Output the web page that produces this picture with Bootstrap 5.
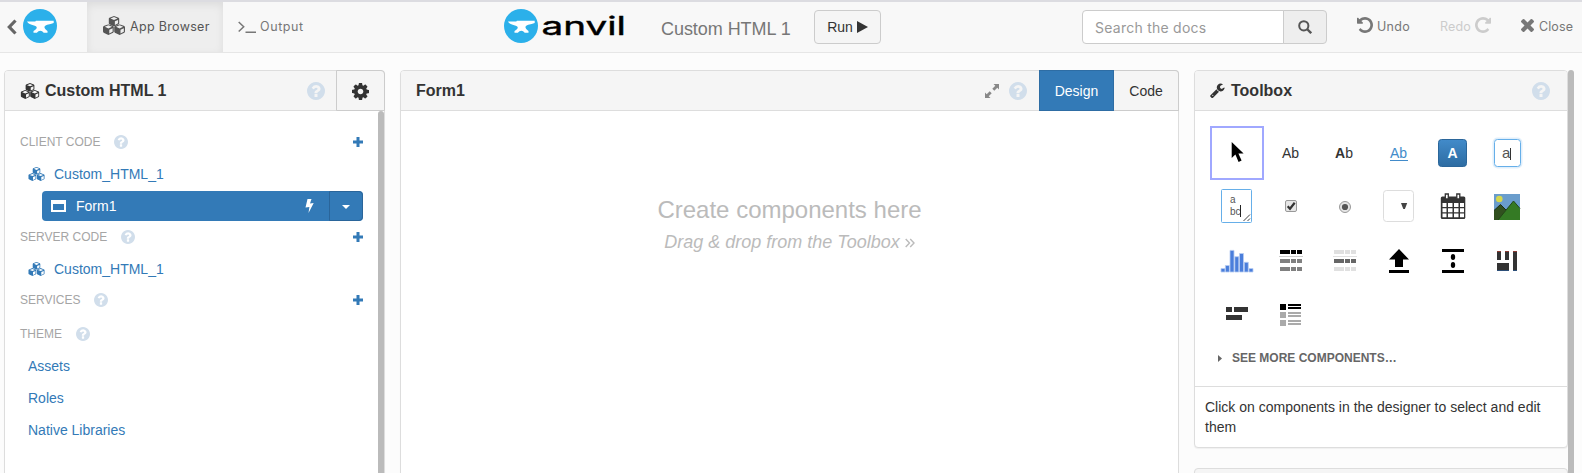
<!DOCTYPE html>
<html lang="en">
<head>
<meta charset="utf-8">
<meta name="viewport" content="width=device-width, initial-scale=1">
<title>Anvil - Custom HTML 1</title>
<link href="https://cdn.jsdelivr.net/npm/bootstrap@5.3.0/dist/css/bootstrap.min.css" rel="stylesheet">
<style>
body{font:14px/20px "Liberation Sans",Arial,sans-serif;color:#333;background:#fcfcfc;height:473px;overflow:hidden}
svg{display:block;flex:none;fill:currentColor}
a{text-decoration:none}
.topbar{height:53px;background:#f8f8f8;border-top:2px solid #dcdce1;border-bottom:1px solid #e6e6e6;padding:0;flex-wrap:nowrap;justify-content:flex-start;align-items:stretch}
.topbar>*{flex:none}
.geo{font-family:Inter,sans-serif;font-size:12.5px;color:#777}
.home{width:87px;padding-left:7px;color:#666}
.tab{height:50px}
.tab-on{width:136px;background:#eee;color:#555;box-shadow:inset 0 3px 9px rgba(0,0,0,.075);padding-left:15px}
.tab-out{width:281px;padding-left:15px}
.brand{width:157px}
.app-title{width:153px;font-size:18px;color:#777;padding-top:4px}
.btn-run{width:67px;height:34px;margin-top:8px;padding:0;font-size:14px;color:#333;background:#f5f5f5;border:1px solid #ccc;border-radius:4px}
.search{width:245px;height:34px;margin:8px 0 0 201px}
.search .form-control{font:14px Inter,sans-serif;letter-spacing:.25px;border-color:#ccc;padding:0 12px;border-radius:4px}
.search .form-control::placeholder{color:#999}
.search .input-group-text{width:44px;background:#eee;border-color:#ccc;padding:0;justify-content:center;color:#555;border-radius:4px}
.work{height:403px;margin-top:17px;overflow:hidden;padding-left:4px}
.pane{border:1px solid #ddd;border-radius:4px;background:#fff;flex:none;box-shadow:0 1px 1px rgba(0,0,0,.05)}
.tall{height:420px}
.pane-head{height:40px;background:#f5f5f5;border-bottom:1px solid #ddd;border-radius:3px 3px 0 0;padding-left:15px;font-size:16px;font-weight:700;line-height:39px}
.pane-left{width:381px}.pane-mid{width:779px;margin-left:15px}.tools{width:374px;margin-left:15px}
.help{color:#d1deeb}
.gear{width:49px;height:41px;margin:-1px -1px 0 11px;border:1px solid #ccc;border-radius:0 4px 0 0}
.seg{height:41px;margin-top:-1px;border:1px solid #ccc;padding:0;border-radius:0;font-size:14px;line-height:41px;color:#333}
.seg-on{width:75px;background:#337ab7;border-color:#2e6da4;color:#fff}
.seg-off{width:65px;border-left:0;border-radius:0 4px 0 0;margin-right:-1px;background:#f5f5f5}
.bar-thumb{width:6px;background:#bbb;border-radius:4px 4px 0 0;flex:none}
.tree{padding:15px 15px 0 15px}
.sec{height:32px;color:#a5a5a5;font-size:12px}
.sec .plus{color:#337ab7}
.leaf{height:32px;color:#337ab7;padding-left:8px;font-size:14px}
.form-btn{height:30px;margin:1px 0 0 22px;border-radius:4px;background:#337ab7;color:#fff;padding-left:9px}
.form-btn .drop{width:34px;height:30px;border:1px solid #2a659a;border-radius:0 4px 4px 0}
.canvas-msg{color:#bbb;text-align:center;padding-top:84px}
.canvas-msg .big{font-size:24px;line-height:30px}
.canvas-msg .sub{font-size:18px;line-height:20px;font-style:italic;margin-top:7px}
.palette{display:grid;grid-template-columns:repeat(6,54px);grid-auto-rows:54px;margin:15px 0 0 15px}
.palette svg{width:54px;height:54px}
.picked{outline:2px solid #a0a8ff;outline-offset:-2px}
.more{font-size:12px;font-weight:700;color:#666;margin:6px 0 0 23px;height:20px}
.hint{margin-top:18px;border-top:1px solid #ddd;padding:10px 10px 10px;line-height:20px}
.next{height:30px;margin-top:20px;background:#f5f5f5}
</style>
</head>
<body>
<svg width="0" height="0" class="position-absolute">
<symbol id="q" viewBox="128 128 1536 1536"><path d="M1024 1376v-192q0-14-9-23t-23-9h-192q-14 0-23 9t-9 23v192q0 14 9 23t23 9h192q14 0 23-9t9-23zm256-672q0-88-55.500-163t-138.500-116-170-41q-243 0-371 213-15 24 8 42l132 100q7 6 19 6 16 0 25-12 53-68 86-92 34-24 86-24 48 0 85.500 26t37.500 59q0 38-20 61t-68 45q-63 28-115.500 86.500t-52.500 125.500v36q0 14 9 23t23 9h192q14 0 23-9t9-23q0-19 21.500-49.500t54.500-49.500q32-18 49-28.500t46-35 44.500-48 28-60.500 12.500-81zm384 192q0 209-103 385.500t-279.500 279.500-385.500 103-385.500-103-279.500-279.500-103-385.500 103-385.500 279.500-279.500 385.500-103 385.500 103 279.500 279.500 103 385.500z"/></symbol>
<symbol id="plus" viewBox="0 0 10 10"><path d="M3.500 0h3v3.500H10v3H6.500V10h-3V6.500H0v-3h3.500z"/></symbol>
<symbol id="undo" viewBox="128 128 1536 1536"><path d="M1664 896q0 156-61 298t-164 245-245 164-298 61q-172 0-327-72.500t-264-204.500q-7-10-6.500-22.500t8.500-20.500l137-138q10-9 25-9 16 2 23 12 73 95 179 147t225 52q104 0 198.500-40.500t163.500-109.500 109.500-163.500 40.500-198.500-40.500-198.500-109.500-163.500-163.500-109.500-198.500-40.500q-98 0-188 35.500t-160 101.500l137 138q31 30 14 69-17 40-59 40h-448q-26 0-45-19t-19-45v-448q0-42 40-59 39-17 69 14l130 129q107-101 244.500-156.500t284.500-55.500q156 0 298 61t245 164 164 245 61 298z"/></symbol>
<symbol id="cube" viewBox="0 0 12 12"><path fill-rule="evenodd" d="M6 0l5.300 2 .7 1v5.500l-.7 1L6 12 .7 9.500 0 8.500V3l.7-1zM6 1.200L2 2.900 6 4.600l4-1.700zM7 6.100v4.200l3.700-1.900V4.500z"/></symbol>
<symbol id="cubes" viewBox="0 0 24 20"><use href="#cube" x="5.800" y="0" width="12.400" height="11" preserveAspectRatio="none"/><use href="#cube" x="0" y="8.700" width="12.200" height="11.300" preserveAspectRatio="none"/><use href="#cube" x="11.800" y="8.700" width="12.200" height="11.300" preserveAspectRatio="none"/></symbol>
<symbol id="anvil" viewBox="0 0 34 34"><circle cx="17" cy="17" r="17" fill="#2bb0ea"/><path fill="#fff" d="M4 12.600h8.300l.6-.9h17.800v2.200c-2 .7-4 1.200-6.500 1.800-2.500.8-3.300 1.900-2.400 3.600.5.900 1.300 1.700 2.700 2.800v1.700h-3.800c-.9-1.300-2.200-2-3.400-2s-2.500.7-3.400 2h-3.400v-1.700c1.700-1.200 2.800-2 3.200-3.200.3-1.300-.6-2-2.700-2.500-3.200-.5-5.900-1.700-7-3.800z"/></symbol>
</svg>

<nav class="navbar topbar">
  <div class="home d-flex align-items-center">
    <svg width="10" height="16" viewBox="0 0 10 16"><path d="M8.500 1.500L2.300 8l6.200 6.500" fill="none" stroke="currentColor" stroke-width="3.200"/></svg>
    <svg width="34" height="34" style="margin-left:6px;margin-top:-3px"><use href="#anvil"/></svg>
  </div>
  <div class="tab tab-on geo d-flex align-items-center">
    <svg width="24" height="19" class="me-1" style="margin-top:-4px"><use href="#cubes"/></svg><span style="letter-spacing:.32px">App Browser</span>
  </div>
  <div class="tab tab-out geo d-flex align-items-center">
    <svg width="18" height="14" viewBox="0 0 18 14" fill="none" style="margin-right:4px"><path d="M.7 2l5 4.800L.7 11.500M7.500 12.200H18" fill="none" stroke="currentColor" stroke-width="1.500"/></svg><span style="letter-spacing:.6px">Output</span>
  </div>
  <div class="brand d-flex">
    <svg width="34" height="34" style="margin-top:7px"><use href="#anvil"/></svg>
    <svg width="90" height="40" viewBox="0 0 90 40"><text x="3.500" y="32.800" font-family="Inter,sans-serif" font-size="25.500" font-weight="400" fill="#000" stroke="#000" stroke-width=".4" textLength="84.500" lengthAdjust="spacingAndGlyphs">anvil</text></svg>
  </div>
  <div class="app-title d-flex align-items-center" style="letter-spacing:-.05px">Custom HTML 1</div>
  <button class="btn btn-run d-flex align-items-center justify-content-center">Run<svg width="11" height="12" viewBox="0 0 11 12" style="margin-left:4px"><path d="M0 0l11 6-11 6z"/></svg></button>
  <div class="input-group search">
    <input class="form-control" type="text" placeholder="Search the docs">
    <span class="input-group-text"><svg width="14" height="14" viewBox="0 0 14 14" fill="none" stroke="currentColor" stroke-width="2"><circle cx="5.800" cy="5.800" r="4.600" fill="none"/><path d="M9 9l4.200 4.200" stroke-width="2.400"/></svg></span>
  </div>
  <div class="geo d-flex align-items-center" style="margin-left:30px;width:83px"><svg width="16" height="16" style="margin:-4px 4px 0 0"><use href="#undo"/></svg><span style="letter-spacing:.3px">Undo</span></div>
  <div class="geo d-flex align-items-center" style="width:81px;color:#ccc"><span style="letter-spacing:.15px">Redo</span><svg width="16" height="16" style="margin:-4px 0 0 4px;transform:scaleX(-1)"><use href="#undo"/></svg></div>
  <div class="geo d-flex align-items-center"><svg width="13" height="13" viewBox="302 366 1188 1188" style="margin:-4px 5px 0 0"><path d="M1490 1322q0 40-28 68l-136 136q-28 28-68 28t-68-28l-294-294-294 294q-28 28-68 28t-68-28l-136-136q-28-28-28-68t28-68l294-294-294-294q-28-28-28-68t28-68l136-136q28-28 68-28t68 28l294 294 294-294q28-28 68-28t68 28l136 136q28 28 28 68t-28 68l-294 294 294 294q28 28 28 68z"/></svg><span style="letter-spacing:.1px">Close</span></div>
</nav>

<main class="work d-flex align-items-start">
  <section class="pane pane-left tall">
    <div class="pane-head d-flex align-items-center">
      <svg width="20" height="16" style="margin-right:5px"><use href="#cubes"/></svg>Custom HTML 1
      <svg class="help ms-auto" width="18" height="18"><use href="#q"/></svg>
      <div class="gear d-flex align-items-center justify-content-center"><svg width="17" height="17" viewBox="128 128 1536 1536" style="margin:3px 0 0 0"><path d="M1152 896q0-106-75-181t-181-75-181 75-75 181 75 181 181 75 181-75 75-181zm512-109v222q0 12-8 23t-20 13l-185 28q-19 54-39 91 35 50 107 138 10 12 10 25t-9 23q-27 37-99 108t-94 71q-12 0-26-9l-138-108q-44 23-91 38-16 136-29 186-7 28-36 28h-222q-14 0-24.500-8.500t-11.500-21.500l-28-184q-49-16-90-37l-141 107q-10 9-25 9-14 0-25-11-126-114-165-168-7-10-7-23 0-12 8-23 15-21 51-66.500t54-70.500q-27-50-41-99l-183-27q-13-2-21-12.500t-8-23.500v-222q0-12 8-23t19-13l186-28q14-46 39-92-40-57-107-138-10-12-10-24 0-10 9-23 26-36 98.500-107.500t94.500-71.500q13 0 26 10l138 107q44-23 91-38 16-136 29-186 7-28 36-28h222q14 0 24.500 8.500t11.500 21.500l28 184q49 16 90 37l142-107q9-9 24-9 13 0 25 10 129 119 165 170 7 8 7 22 0 12-8 23-15 21-51 66.500t-54 70.500q26 50 41 98l183 28q13 2 21 12.500t8 23.500z"/></svg></div>
    </div>
    <div class="d-flex" style="height:379px">
      <div class="tree flex-grow-1">
        <div class="sec d-flex align-items-center">CLIENT CODE<svg class="help" width="14" height="14" style="margin-left:14px"><use href="#q"/></svg><svg class="plus ms-auto" width="10" height="10"><use href="#plus"/></svg></div>
        <a class="leaf d-flex align-items-center" href="#"><svg width="17" height="14" style="margin-right:9px"><use href="#cubes"/></svg>Custom_HTML_1</a>
        <div class="form-btn d-flex align-items-center"><svg width="15" height="12" viewBox="0 0 15 12"><path fill-rule="evenodd" d="M0 0h15v12H0zM2 4v6h11V4z"/></svg><span style="margin-left:10px">Form1</span>
          <svg class="ms-auto" width="9" height="14" viewBox="0 0 9 14"><path d="M2.500 0h4L5 4.500 8.700 4 3.500 14l.9-6L.5 8.500z"/></svg>
          <div class="drop d-flex align-items-center justify-content-center" style="margin-left:15px"><svg width="8" height="4" viewBox="0 0 8 4" style="margin-top:2px"><path d="M0 0h8L4 4z"/></svg></div></div>
        <div class="sec d-flex align-items-center">SERVER CODE<svg class="help" width="14" height="14" style="margin-left:14px"><use href="#q"/></svg><svg class="plus ms-auto" width="10" height="10"><use href="#plus"/></svg></div>
        <a class="leaf d-flex align-items-center" href="#"><svg width="17" height="14" style="margin-right:9px"><use href="#cubes"/></svg>Custom_HTML_1</a>
        <div class="sec d-flex align-items-center" style="height:30px">SERVICES<svg class="help" width="14" height="14" style="margin-left:14px"><use href="#q"/></svg><svg class="plus ms-auto" width="10" height="10"><use href="#plus"/></svg></div>
        <div class="sec d-flex align-items-center" style="height:35px;padding-top:3px">THEME<svg class="help" width="14" height="14" style="margin-left:14px"><use href="#q"/></svg></div>
        <a class="leaf d-flex align-items-center" href="#">Assets</a>
        <a class="leaf d-flex align-items-center" href="#">Roles</a>
        <a class="leaf d-flex align-items-center" href="#">Native Libraries</a>
      </div>
      <div class="bar-thumb"></div>
    </div>
  </section>

  <section class="pane pane-mid tall">
    <div class="pane-head d-flex align-items-center">Form1
      <svg class="ms-auto" width="14" height="14" viewBox="0 0 14 14" style="color:#888;margin-right:10px"><path d="M8.500 0H14v5.500l-1.700-1.700-3 3-2-2 3-3zM5.500 14H0V8.500l1.700 1.700 3-3 2 2-3 3z"/></svg>
      <svg class="help" width="18" height="18" style="margin-right:12px"><use href="#q"/></svg>
      <button class="btn seg seg-on">Design</button><button class="btn seg seg-off">Code</button>
    </div>
    <div class="canvas-msg"><div class="big">Create components here</div><div class="sub">Drag &amp; drop from the Toolbox <svg class="d-inline-block" width="10" height="10" viewBox="0 0 10 10" fill="none"><path d="M.7 1l3.800 4-3.800 4M5.200 1L9 5 5.200 9" fill="none" stroke="currentColor" stroke-width="1.400"/></svg></div></div>
  </section>

  <div class="tools">
    <section class="pane">
      <div class="pane-head d-flex align-items-center">
        <svg width="15" height="15" viewBox="85 64 1664 1707" style="margin-right:6px"><path d="M448 1472q0-26-19-45t-45-19-45 19-19 45 19 45 45 19 45-19 19-45zm644-420l-682 682q-37 37-90 37-52 0-91-37l-106-108q-38-36-38-90 0-53 38-91l681-681q39 98 114.500 173.500t173.500 114.500zm634-435q0 39-23 106-47 134-164.500 217.500t-258.500 83.500q-185 0-316.500-131.500t-131.500-316.500 131.500-316.500 316.500-131.500q58 0 121.500 16.500t107.500 46.500q16 11 16 28t-16 28l-293 169v224l193 107q5-3 79-48.500t135.500-81 70.500-35.500q15 0 23.500 10t8.500 25z"/></svg>Toolbox
        <svg class="help ms-auto" width="18" height="18" style="margin-right:17px"><use href="#q"/></svg>
      </div>
      <div class="palette">
        <svg class="picked"><path fill="#000" d="M21.700 16v16l3.700-3.500 3.200 7.400 3-1.300-3.200-7.100h5.200z"/></svg>
        <svg><text x="18" y="32" font-size="14">Ab</text></svg>
        <svg><text x="17" y="32" font-size="14"><tspan font-weight="700">A</tspan>b</text></svg>
        <svg style="color:#428bca"><text x="18" y="32" font-size="14">Ab</text><path d="M18 34h18v1H18z"/></svg>
        <svg><defs><linearGradient id="gb" x2="0" y2="1"><stop stop-color="#428bca"/><stop offset="1" stop-color="#2d6ca2"/></linearGradient></defs><rect x="12.500" y="13.500" width="28" height="27" rx="3" fill="url(#gb)" stroke="#2b669a"/><text x="26.500" y="32" font-size="14" font-weight="700" fill="#fff" text-anchor="middle">A</text></svg>
        <svg><rect x="13.500" y="12.500" width="28" height="29" rx="4" fill="none" stroke="#e1effb" stroke-width="2"/><rect x="14.500" y="13.500" width="26" height="27" rx="3" fill="#fff" stroke="#66afe9"/><text x="22" y="31.500" font-size="15" fill="#555">a</text><path fill="#333" d="M30 22h1v12h-1z"/></svg>
        <svg><rect x="11.500" y="9.500" width="30" height="33" rx="1" fill="#fff" stroke="#66afe9"/><g font-size="10" fill="#555"><text x="20" y="23.300">a</text><text x="20" y="35">bc</text></g><path fill="#222" d="M30 25h1v12h-1z"/><path d="M33.500 41l6.500-6.500M37.500 41l2.500-2.500" stroke="#444"/></svg>
        <svg><rect x="21.500" y="20.500" width="11" height="11" rx="1.500" fill="#e6e6e6" stroke="#999"/><path d="M23.700 26.200l2.300 2.600 4.700-6" fill="none" stroke="#333" stroke-width="2.200"/></svg>
        <svg><circle cx="27" cy="27" r="5.500" fill="#e6e6e6" stroke="#999"/><circle cx="27" cy="27" r="3.100" fill="#555"/></svg>
        <svg><rect x="11.500" y="10.500" width="30" height="31" rx="3" fill="#fff" stroke="#ddd"/><path fill="#444" d="M29 23h6.200l-2.300 6h-1.600z"/></svg>
        <svg><rect x="14.800" y="16.500" width="24.500" height="22.500" rx="1.500"/><path fill="#fff" d="M16.500 23h4v4h-4zm5.500 0h4.500v4H22zm6 0h4.500v4H28zm6 0h4v4h-4zm-17.500 5.300h4v4h-4zm5.500 0h4.500v4H22zm6 0h4.500v4H28zm6 0h4v4h-4zM16.500 33.500h4v3.700h-4zm5.500 0h4.500v3.700H22zm6 0h4.500v3.700H28zm6 0h4v3.700h-4z"/><path d="M19.300 14h3v5h-3zM30.800 14h3v5h-3z" fill="#fff" stroke="#333" stroke-width="1.300"/></svg>
        <svg><path fill="#6a9dcc" d="M14 14h26v26H14z"/><circle cx="19.300" cy="19" r="3.300" fill="#d5d84e"/><path fill="#31501f" d="M14 30.500l6.500-6L27 31v9H14z"/><path d="M14 30.500l6.500-6L26 30" fill="none" stroke="#1d2f17"/><path fill="#347a24" d="M18 40l15.500-19L40 28.500V40z"/><path d="M18 40l15.500-19L40 28.500" fill="none" stroke="#224818"/></svg>
        <svg fill="#4a7edb" style="color:#4a7edb" stroke="#b7cdf2" stroke-width=".8"><path d="M11 34.500h4V38h-4z"/><path d="M15.400 31.500h4V38h-4z"/><path d="M20 16.400h4V38h-4z"/><path d="M24.800 22.700h4V38h-4z"/><path d="M29.500 19.500h4V38h-4z"/><path d="M34.300 28.300h4V38h-4z"/><path d="M39 34.500h4V38h-4z"/></svg>
        <svg shape-rendering="crispEdges"><path fill="#000" d="M16 16h10v4H16zm11 0h5v4h-5zm6 0h5v4h-5z"/><path fill="#ccc" d="M15 22h24v1H15z"/><path fill="#808080" d="M16 25h10v4H16zm11 0h5v4h-5zm6 0h5v4h-5zM16 33h10v4H16zm11 0h5v4h-5zm6 0h5v4h-5z"/></svg>
        <svg shape-rendering="crispEdges"><path fill="#e0e0e0" d="M16 16h10v4H16zm11 0h5v4h-5zm6 0h5v4h-5zM15 22h24v1H15zM16 33h10v4H16zm11 0h5v4h-5zm6 0h5v4h-5z"/><path fill="#666" d="M16 25h10v4H16zm11 0h5v4h-5zm6 0h5v4h-5z"/></svg>
        <svg><path fill="#000" d="M27 15l10 10.500h-6V33h-8v-7.500h-6zM17 36h20v3H17z"/></svg>
        <svg><path fill="#000" d="M16 15h22v3H16zM16 36h22v3H16z"/><ellipse cx="27" cy="23" rx="2.200" ry="3" fill="#000"/><ellipse cx="27" cy="31" rx="2.200" ry="3" fill="#000"/></svg>
        <svg><path d="M17 17h4v9h-4zm8 0h4v9h-4zm8 0h4v20h-4zM17 29h12v8H17z"/><path fill="#8b3a32" d="M17 17h4v1h-4zm8 0h4v1h-4zm8 0h4v1h-4z"/><path fill="#2d4f78" d="M17 36h12v1H17zm16 0h4v1h-4z"/></svg>
        <svg><path d="M16 19h6v5h-6zm8 0h14v5H24zM16 27h16v5H16z"/></svg>
        <svg><path fill="#000" d="M16 16h6v6h-6zm8 0h13v2H24zm0 3h13v2H24z"/><path fill="#aaa" d="M16 24h6v6h-6zm8 0h13v2H24zm0 3h13v2H24zM16 32h6v6h-6zm8 0h13v2H24zm0 3h13v2H24z"/></svg>
      </div>
      <div class="more d-flex align-items-center"><svg width="4" height="7" viewBox="0 0 4 7" style="margin-right:10px"><path d="M0 0l4 3.500L0 7z"/></svg>SEE MORE COMPONENTS…</div>
      <div class="hint">Click on components in the designer to select and edit them</div>
    </section>
    <section class="pane next"></section>
  </div>
  <div class="bar-thumb tall"></div>
</main>
<script src="https://cdn.jsdelivr.net/npm/bootstrap@5.3.0/dist/js/bootstrap.bundle.min.js"></script>
</body>
</html>
